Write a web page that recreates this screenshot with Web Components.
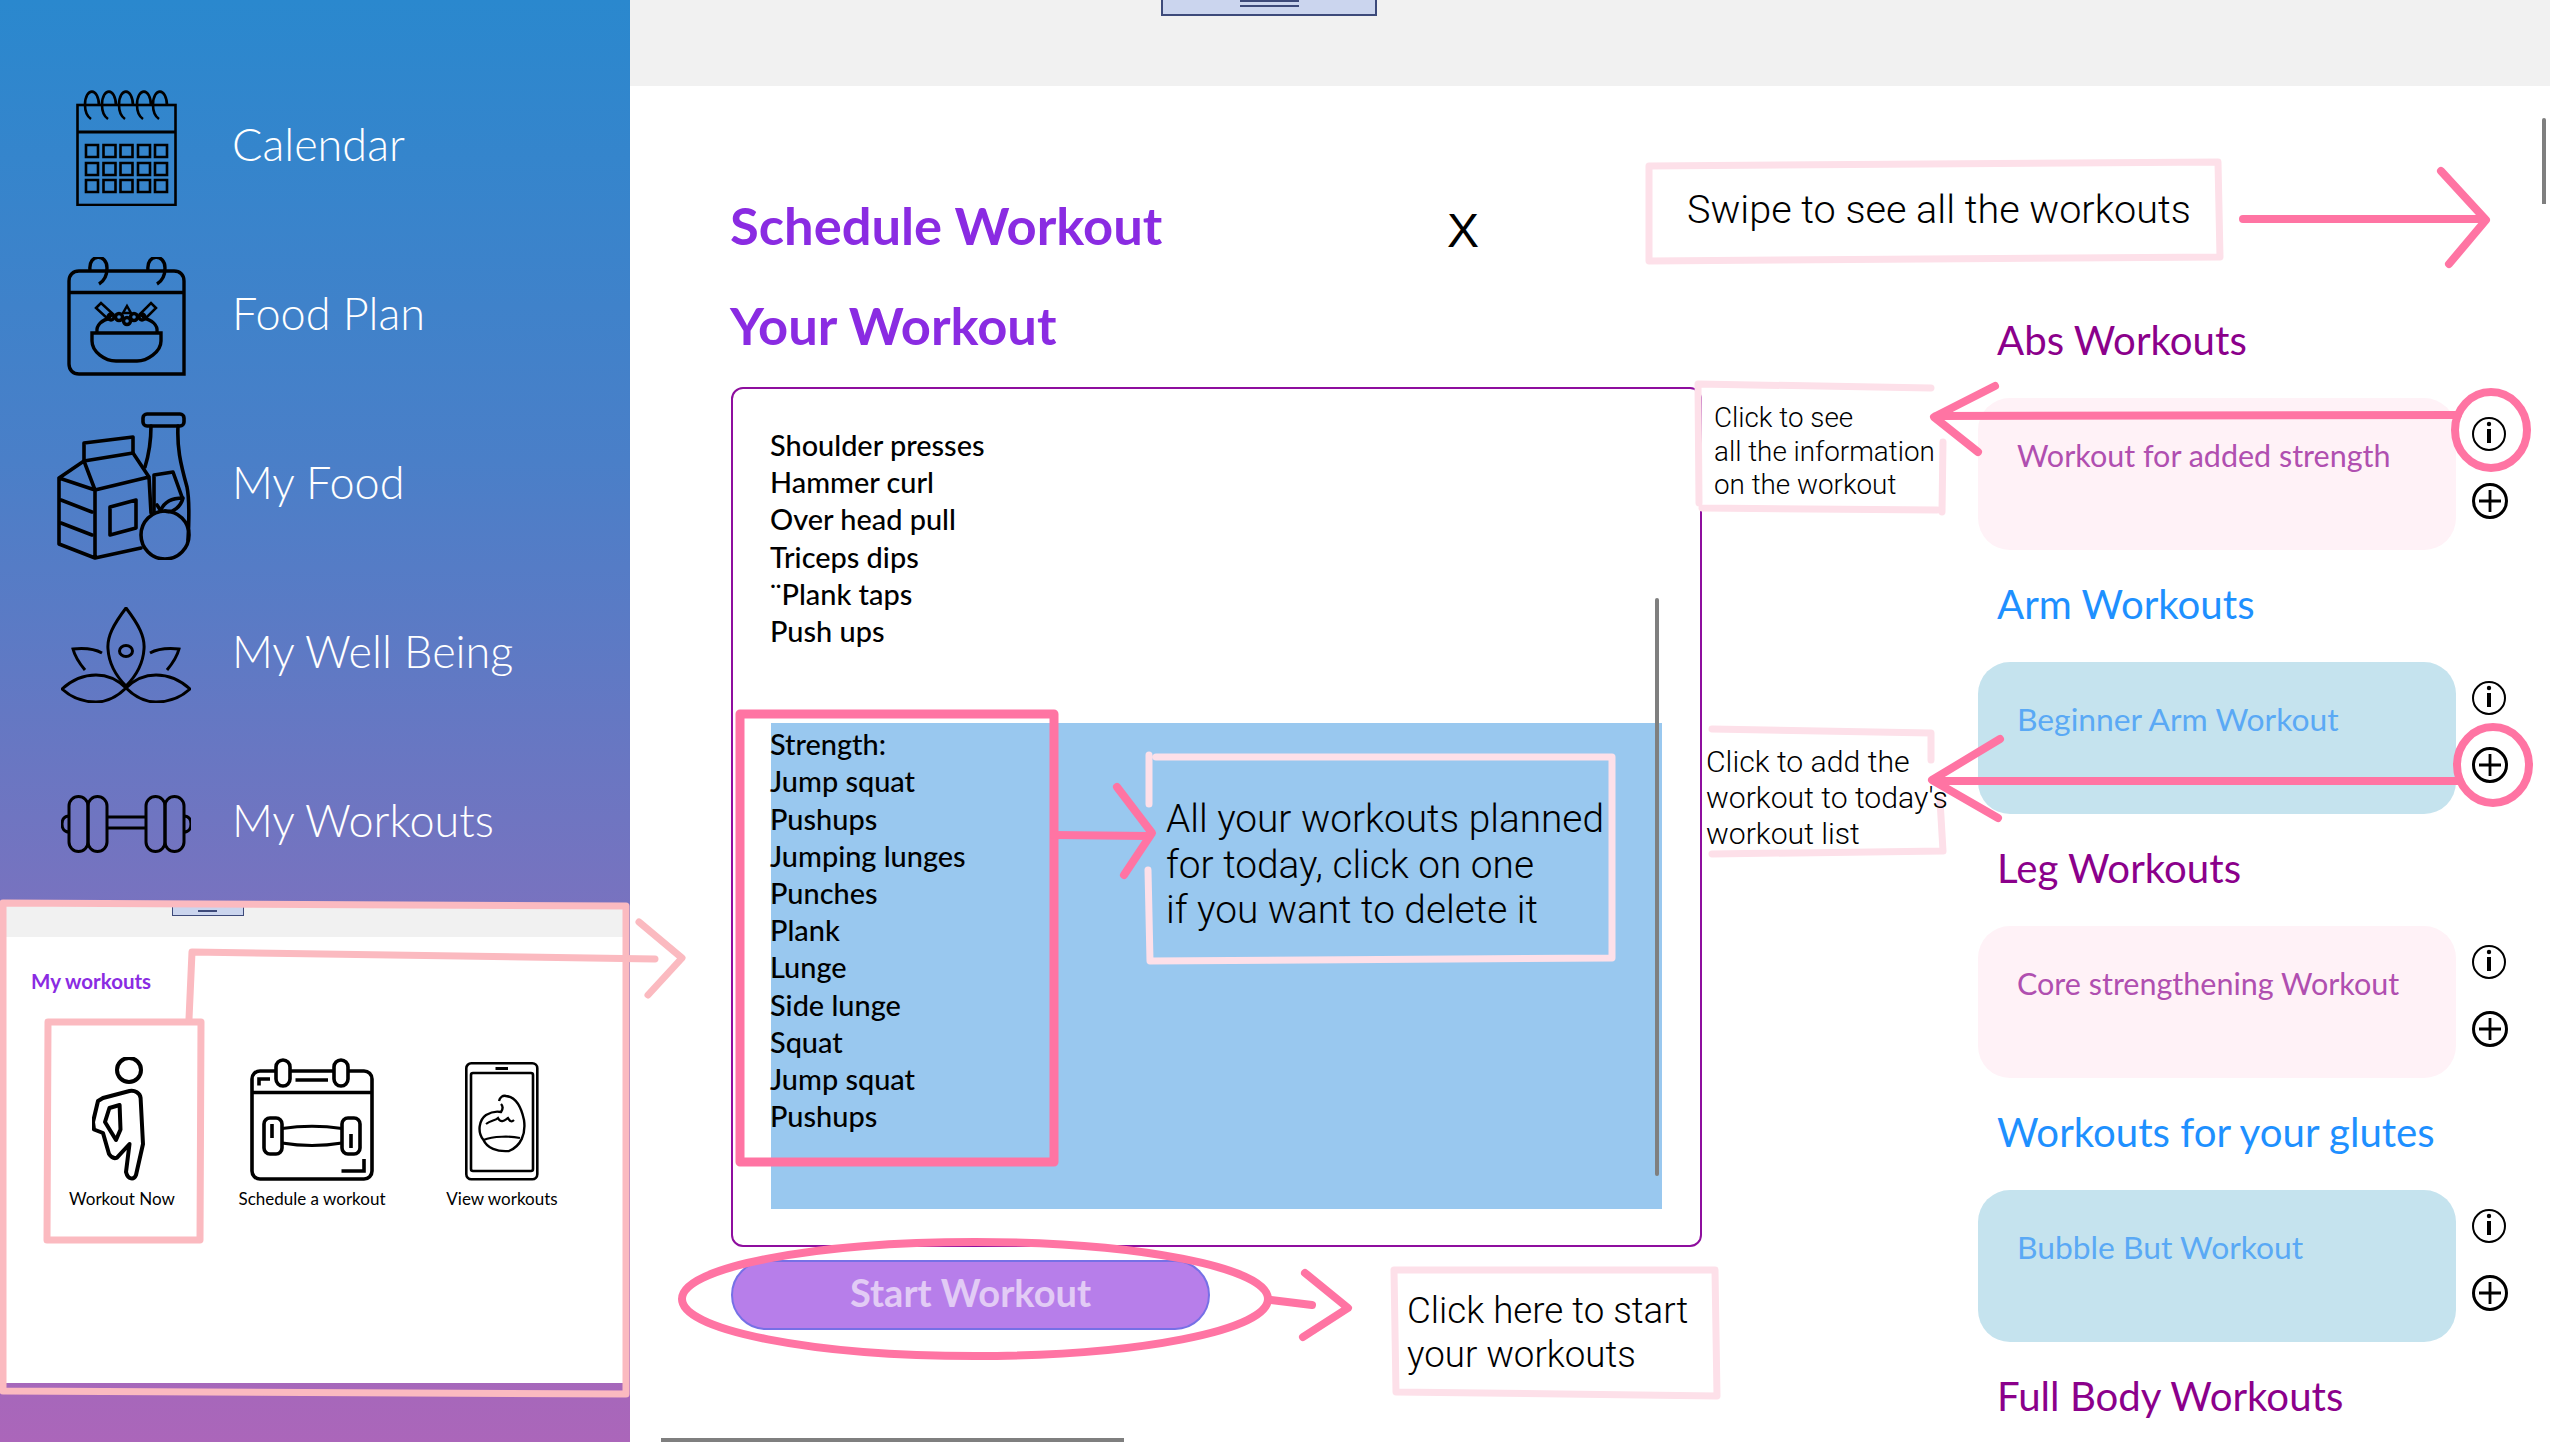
<!DOCTYPE html>
<html lang="en">
<head>
<meta charset="utf-8">
<title>Schedule Workout</title>
<style>
html, body {
    margin: 0;
    width: 2550px;
    height: 1442px;
    overflow: hidden;
    background: #fff;
    font-family: Lato, "Open Sans", sans-serif;
}
</style>
</head>
<body>
<app-shell>
    <side-nav slot="side">
        <nav-item label="Calendar">
            <svg width="101" height="116" viewBox="0 0 101 116" fill="none" stroke="#000" stroke-width="2.6">
                <rect x="1.5" y="15" width="98" height="100"/>
                <path d="M1.5 42H99.5" stroke-width="3"/>
                <path d="M23 16C23 -3 9 -3 9 15C9 22 12 27 15 29M40 16C40 -3 26 -3 26 15C26 22 29 27 32 29M57 16C57 -3 43 -3 43 15C43 22 46 27 49 29M75 16C75 -3 61 -3 61 15C61 22 64 27 67 29M91 16C91 -3 77 -3 77 15C77 22 80 27 83 29"/>
                <path d="M10 55h12v12h-12zM27.500 55h12v12h-12zM44.500 55h12v12h-12zM62 55h12v12h-12zM79 55h12v12h-12zM10 73h12v12h-12zM27.500 73h12v12h-12zM44.500 73h12v12h-12zM62 73h12v12h-12zM79 73h12v12h-12zM10 90h12v12h-12zM27.500 90h12v12h-12zM44.500 90h12v12h-12zM62 90h12v12h-12zM79 90h12v12h-12z"/>
            </svg>
        </nav-item>
        <nav-item label="Food Plan">
            <svg width="119" height="119" viewBox="0 0 119 119" fill="none" stroke="#000" stroke-width="3.4">
                <path d="M12 14H107C113 14 117 18 117 24V117H12C6 117 2 113 2 107V24C2 18 6 14 12 14Z"/>
                <path d="M2 35.500H117"/>
                <path d="M23 13C21 -3 40 -4 40 11C40 19 37 24 32 27M81 13C79 -3 98 -4 98 11C98 19 95 24 90 27"/>
                <path d="M25 76H94V84C94 95 80 104 70 104H49C38 104 25 95 25 84Z"/>
                <path d="M30 75C29 68 35 63 43 61M90 75C91 68 85 63 76 61"/>
                <circle cx="44" cy="60" r="3"/><circle cx="52" cy="60" r="3.500"/><circle cx="67" cy="60" r="3.500"/><circle cx="75" cy="60" r="3"/><circle cx="60" cy="64" r="3.500"/>
                <path d="M60 49L64 56H56Z" stroke-width="2.500"/>
                <path d="M29 51L34 46L46 57L41 62ZM89 51L84 46L73 57L78 62Z" stroke-width="2.500"/>
            </svg>
        </nav-item>
        <nav-item label="My Food">
            <svg style="margin-left:-4px" width="134" height="148" viewBox="0 0 134 148" fill="none" stroke="#000" stroke-width="3.600" stroke-linejoin="round" stroke-linecap="round">
                <rect x="86" y="2" width="41" height="12" rx="4"/>
                <path d="M94 14C94 30 92 42 88 55M121 14C120 35 123 50 130 75C133 90 132 110 131 128"/>
                <path d="M27 49V31L76 25V41"/>
                <path d="M27 49L76 41L92 65L38 78L27 49L2 66L38 78V146M2 66V132L38 146L84 136M92 65L94 101"/>
                <path d="M4 88L35 100M4 111L35 123"/>
                <path d="M53 95L79 88V116L53 123Z"/>
                <path d="M97 101V63L116 60L125 85"/>
                <ellipse cx="108" cy="123" rx="24" ry="24"/>
                <path d="M104 98C108 88 118 86 126 86C124 94 116 102 108 99M104 99L100 93"/>
            </svg>
        </nav-item>
        <nav-item label="My Well Being">
            <svg width="130" height="96" viewBox="0 0 130 96" fill="none" stroke="#000" stroke-width="3">
                <path d="M65 1C52 18 46 30 47 42C48 58 56 70 65 79C74 70 82 58 83 42C84 30 78 18 65 1Z"/>
                <ellipse cx="65" cy="44" rx="6.500" ry="5.500"/>
                <path d="M41 46C32 41 22 41 12 42C14 50 19 57 24 63M89 46C98 41 108 41 118 42C116 50 111 57 106 63"/>
                <path d="M1 82C12 72 24 68 35 68C46 68 56 72 65 81C56 90 46 95 35 95C24 95 12 92 1 82Z"/>
                <path d="M129 82C118 72 106 68 95 68C84 68 74 72 65 81C74 90 84 95 95 95C106 95 118 92 129 82Z"/>
            </svg>
        </nav-item>
        <nav-item label="My Workouts">
            <svg width="130" height="58" viewBox="0 0 130 58" fill="none" stroke="#000" stroke-width="3">
                <rect x="8" y="1.500" width="19" height="55" rx="9.500"/>
                <rect x="27" y="1.500" width="19" height="55" rx="9.500"/>
                <rect x="85" y="1.500" width="19" height="55" rx="9.500"/>
                <rect x="104" y="1.500" width="19" height="55" rx="9.500"/>
                <path d="M46 22H85M46 33H85"/>
                <path d="M8 21C3 21 1 25 1 29C1 33 3 37 8 37M123 21C128 21 130 25 130 29C130 33 128 37 123 37"/>
            </svg>
        </nav-item>
    </side-nav>

    <workout-inset slot="side">
        <inset-tile label="Workout Now">
            <svg style="margin-left:-7px" width="53" height="124" viewBox="0 0 53 124" fill="none" stroke="#000" stroke-width="4" stroke-linejoin="round">
                <ellipse cx="37" cy="13" rx="12" ry="12"/>
                <path d="M11 41L37.500 34C43 33 48 36 48.600 41L51 87L44 118C42 123 36 123 34 115L37.500 87L25 100.600C22 102 19 100 17 97L11 76L2 72.500L1 65L6 44Z"/>
                <path d="M17.400 51L27.600 48L28.500 72.500L24 83L13 65Z"/>
            </svg>
        </inset-tile>
        <inset-tile label="Schedule a workout">
            <svg width="124" height="123" viewBox="0 0 124 123" fill="none" stroke="#000" stroke-width="3.600">
                <rect x="2" y="13" width="120" height="108" rx="8"/>
                <path d="M2 34.500H122"/>
                <rect x="26" y="2" width="14" height="26" rx="7" fill="#fff"/>
                <rect x="84" y="2" width="14" height="26" rx="7" fill="#fff"/>
                <path d="M45.500 22H78M9 27.500V21H20M91.500 113H114V101"/>
                <rect x="14" y="60" width="18" height="36" rx="6"/>
                <rect x="92" y="60" width="18" height="36" rx="6"/>
                <path d="M22 66V80M101 76V90"/>
                <path d="M32 70.500Q62 66 92 70.500M32 85Q62 90 92 85" stroke-width="2.800"/>
            </svg>
        </inset-tile>
        <inset-tile label="View workouts">
            <svg width="74" height="119" viewBox="0 0 74 119" fill="none" stroke="#000" stroke-width="2.600">
                <rect x="1.300" y="1.300" width="71" height="116" rx="5"/>
                <rect x="6" y="11" width="62" height="98" rx="2"/>
                <path d="M30.500 6.500H43" stroke-width="3"/>
                <path d="M34 39C35 35 38 33 41 34C50 35 56 44 59 58C61 72 56 84 44 89C32 90 22 86 18.500 78C12 70 14 58 21 53C26 50 31 49 36 50C38 47 38 44 36 42" stroke-width="2.400"/>
                <path d="M18.500 78C28 74 46 74 55 76M21 62C26 58 30 59 33 56C36 62 40 58 43 56C45 60 47 60 49 58" stroke-width="2.200"/>
            </svg>
        </inset-tile>
    </workout-inset>

    <top-bar slot="main"></top-bar>
    <schedule-pane slot="main">
        <plan-column slot="left">
            <exercise-box>
                <exercise-list slot="plain" items="Shoulder presses|Hammer curl|Over head pull|Triceps dips|¨Plank taps|Push ups"></exercise-list>
                <exercise-list slot="picked" items="Strength:|Jump squat|Pushups|Jumping lunges|Punches|Plank|Lunge|Side lunge|Squat|Jump squat|Pushups"></exercise-list>
            </exercise-box>
        </plan-column>
        <workout-catalog slot="right">
            <workout-section heading="Abs Workouts" title-text="Workout for added strength" tone="pink"></workout-section>
            <workout-section heading="Arm Workouts" title-text="Beginner Arm Workout" tone="blue"></workout-section>
            <workout-section heading="Leg Workouts" title-text="Core strengthening Workout" tone="pink"></workout-section>
            <workout-section heading="Workouts for your glutes" title-text="Bubble But Workout" tone="blue"></workout-section>
            <workout-section heading="Full Body Workouts" tone="pink"></workout-section>
        </workout-catalog>
    </schedule-pane>

    <annotation-layer slot="over"></annotation-layer>
    <note-box slot="over" style="left:1687px;top:187px;font-size:39.600px;line-height:46px">Swipe to see all the workouts</note-box>
    <note-box slot="over" style="left:1714px;top:401px;font-size:27.800px;line-height:33.500px">Click to see<br>all the information<br>on the workout</note-box>
    <note-box slot="over" style="left:1706px;top:744px;font-size:30.200px;line-height:36px">Click to add the<br>workout to today's<br>workout list</note-box>
    <note-box slot="over" style="left:1166px;top:796px;font-size:38.800px;line-height:45.500px">All your workouts planned<br>for today, click on one<br>if you want to delete it</note-box>
    <note-box slot="over" style="left:1407px;top:1289px;font-size:36.700px;line-height:44px">Click here to start<br>your workouts</note-box>
</app-shell>

<script>
class AppShell extends HTMLElement {
    constructor() {
        super();
        this.attachShadow({ mode: 'open' }).innerHTML = `
        <style>
        :host { display: grid; grid-template-columns: 630px 1920px; width: 2550px; height: 1442px; position: relative; overflow: hidden; }
        .side { position: relative; background: linear-gradient(180deg, #2a88ce 0%, #4a7fc8 32%, #7a72bf 64%, #ab66ba 100%); height: 1442px; }
        .main { display: flex; flex-direction: column; height: 1442px; min-width: 0; }
        </style>
        <div class="side"><slot name="side"></slot></div>
        <div class="main"><slot name="main"></slot></div>
        <slot name="over"></slot>`;
    }
}

class SideNav extends HTMLElement {
    constructor() {
        super();
        this.attachShadow({ mode: 'open' }).innerHTML = `
        <style>
        :host { display: flex; flex-direction: column; padding-top: 60px; }
        </style>
        <slot></slot>`;
    }
}

class NavItem extends HTMLElement {
    constructor() {
        super();
        this.attachShadow({ mode: 'open' }).innerHTML = `
        <style>
        :host { display: flex; align-items: center; height: 169px; padding-left: 56px; color: #fff; }
        .ico { width: 140px; display: flex; justify-content: center; padding-top: 6px; margin-right: 36px; }
        .txt { font: 300 45px Lato, sans-serif; white-space: nowrap; margin-top: -2px; }
        </style>
        <div class="ico"><slot></slot></div>
        <div class="txt">${this.getAttribute('label')}</div>`;
    }
}

class WorkoutInset extends HTMLElement {
    constructor() {
        super();
        this.attachShadow({ mode: 'open' }).innerHTML = `
        <style>
        :host { display: block; position: absolute; left: 5px; top: 906px; width: 618px; height: 477px; background: #fff; }
        .bar { height: 31px; background: #f1f1f1; display: flex; justify-content: center; padding-right: 213px; }
        .handle { width: 70px; height: 5px; background: #cbd5ee; border: 1px solid #3d4a7a; display: flex; justify-content: center; padding-top: 3px; }
        .handle i { display: block; width: 19px; height: 2px; background: #3d4a7a; }
        h3 { margin: 29px 0 0 26px; font: 700 20.500px/30px Lato, sans-serif; color: #8a2be2; }
        .tiles { display: flex; padding: 60px 0 0 22px; }
        </style>
        <div class="bar"><div class="handle"><i></i></div></div>
        <h3>My workouts</h3>
        <div class="tiles"><slot></slot></div>`;
    }
}

class InsetTile extends HTMLElement {
    constructor() {
        super();
        this.attachShadow({ mode: 'open' }).innerHTML = `
        <style>
        :host { display: flex; flex-direction: column; align-items: center; width: 190px; }
        .ico { height: 125px; display: flex; align-items: flex-end; }
        span { margin-top: 7px; font: 400 17px/22px Lato, sans-serif; color: #000; white-space: nowrap; }
        </style>
        <div class="ico"><slot></slot></div>
        <span>${this.getAttribute('label')}</span>`;
    }
}

class TopBar extends HTMLElement {
    constructor() {
        super();
        this.attachShadow({ mode: 'open' }).innerHTML = `
        <style>
        :host { display: flex; height: 86px; flex: none; background: #f1f1f1; padding-left: 531px; }
        .handle { width: 212px; height: 14px; background: #cbd5ee; border: 2px solid #3d4a7a; border-top: 0; display: flex; flex-direction: column; align-items: center; gap: 3px; }
        .handle i { display: block; width: 59px; height: 2px; background: #3d4a7a; }
        </style>
        <div class="handle"><i></i><i></i></div>`;
    }
}

class SchedulePane extends HTMLElement {
    constructor() {
        super();
        this.attachShadow({ mode: 'open' }).innerHTML = `
        <style>
        :host { display: flex; flex: 1; min-height: 0; position: relative; }
        .left { width: 1348px; flex: none; }
        .right { flex: 1; min-width: 0; }
        .scroll-v { position: absolute; left: 1912px; top: 32px; width: 4px; height: 86px; border-radius: 2px 2px 0 0; background: #7f7f7f; }
        .scroll-h { position: absolute; left: 31px; bottom: 0; width: 463px; height: 4px; background: #7f7f7f; }
        </style>
        <div class="left"><slot name="left"></slot></div>
        <div class="right"><slot name="right"></slot></div>
        <div class="scroll-v"></div>
        <div class="scroll-h"></div>`;
    }
}

class PlanColumn extends HTMLElement {
    constructor() {
        super();
        this.attachShadow({ mode: 'open' }).innerHTML = `
        <style>
        :host { display: block; padding: 107px 0 0 100px; }
        h1 { margin: 0; font: 700 52.500px/64px Lato, sans-serif; color: #8a2be2; white-space: nowrap; }
        .second { margin-top: 36px; margin-bottom: 30px; }
        .head { position: relative; width: 970px; }
        .close { position: absolute; left: 717px; top: 10px; font: 400 48px/56px "Liberation Sans", sans-serif; color: #000; }
        button { display: block; margin: 13px 0 0 1px; width: 479px; height: 70px; border: 2px solid #7670e6; border-radius: 35px; background: #b77eea; color: #e2cbf5; font: 700 38px Lato, sans-serif; padding: 0 0 7px; }
        </style>
        <div class="head"><h1>Schedule Workout</h1><span class="close">X</span></div>
        <h1 class="second">Your Workout</h1>
        <slot></slot>
        <button>Start Workout</button>`;
    }
}

class ExerciseBox extends HTMLElement {
    constructor() {
        super();
        this.attachShadow({ mode: 'open' }).innerHTML = `
        <style>
        :host { display: block; position: relative; margin-left: 1px; width: 971px; height: 860px; box-sizing: border-box; border: 2px solid #8e0e9e; border-radius: 12px; padding: 37px 38px 38px 38px; }
        .picked { margin-top: 74px; height: 486px; background: #99c8ef; padding-top: 2px; box-sizing: border-box; }
        .bar { position: absolute; left: 922px; top: 209px; width: 4px; height: 578px; border-radius: 2px; background: #7f7f7f; }
        </style>
        <slot name="plain"></slot>
        <div class="picked"><slot name="picked"></slot></div>
        <div class="bar"></div>`;
    }
}

class ExerciseList extends HTMLElement {
    constructor() {
        super();
        const rows = this.getAttribute('items').split('|').map(t => `<li>${t}</li>`).join('');
        this.attachShadow({ mode: 'open' }).innerHTML = `
        <style>
        :host { display: block; }
        ul { list-style: none; margin: 0 0 0 -1px; padding: 0; font: 500 28.900px/37.200px Lato, sans-serif; color: #000; }
        </style>
        <ul>${rows}</ul>`;
    }
}

class WorkoutCatalog extends HTMLElement {
    constructor() {
        super();
        this.attachShadow({ mode: 'open' }).innerHTML = `
        <style>
        :host { display: flex; flex-direction: column; padding-top: 224px; }
        </style>
        <slot></slot>`;
    }
}

class WorkoutSection extends HTMLElement {
    constructor() {
        super();
        const heading = this.getAttribute('heading');
        const title = this.getAttribute('title-text');
        const tone = this.getAttribute('tone');
        const card = title ? `
        <div class="row">
            <div class="card">${title}</div>
            <div class="acts">
                <svg width="34" height="34" viewBox="0 0 34 34" fill="none" stroke="#000"><circle cx="17" cy="17" r="16" stroke-width="2"/><path d="M17 12V26" stroke-width="4"/><circle cx="17" cy="7" r="2.200" fill="#000" stroke="none"/></svg>
                <svg width="36" height="36" viewBox="0 0 36 36" fill="none" stroke="#000"><circle cx="18" cy="18" r="16.500" stroke-width="3"/><path d="M18 7V29M7 18H29" stroke-width="2.800"/></svg>
            </div>
        </div>` : '';
        this.attachShadow({ mode: 'open' }).innerHTML = `
        <style>
        :host { display: block; height: 264px; flex: none; }
        h2 { margin: 0 0 28px 19px; font: 400 40.200px/60px Lato, sans-serif; color: ${tone === 'pink' ? '#8b008b' : '#1e90ff'}; white-space: nowrap; }
        .row { display: flex; gap: 16px; }
        .card { width: 478px; height: 152px; box-sizing: border-box; padding: 37px 0 0 39px; border-radius: 32px; font: 400 ${tone === 'pink' ? 30.5 : 31.8}px/40px Lato, sans-serif;
            background: ${tone === 'pink' ? '#fff2f7' : '#c5e3ee'}; color: ${tone === 'pink' ? '#b04fb0' : '#5aa9f5'}; white-space: nowrap; }
        .acts { display: flex; flex-direction: column; align-items: flex-start; gap: 32px; padding-top: 19px; }
        svg { display: block; }
        </style>
        <h2>${heading}</h2>
        ${card}`;
    }
}

class AnnotationLayer extends HTMLElement {
    constructor() {
        super();
        this.attachShadow({ mode: 'open' }).innerHTML = `
        <style>
        :host { display: block; position: absolute; left: 0; top: 0; width: 2550px; height: 1442px; pointer-events: none; }
        svg { display: block; }
        .soft { stroke: #fbbac0; stroke-width: 7; }
        .hot { stroke: #ff74a3; stroke-width: 8; }
        .pale { stroke: #fde0e9; stroke-width: 7; }
        </style>
        <svg width="2550" height="1442" viewBox="0 0 2550 1442" fill="none" stroke-linecap="round" stroke-linejoin="round">
            <g class="soft">
                <path d="M3 903L626 906V1394L3 1391Z"/>
                <path d="M48 1022H201L200 1240H47Z"/>
                <path d="M189 1019L192 952L655 959"/>
                <path d="M639 922L682 958L648 995"/>
            </g>
            <g class="hot">
                <path d="M740 714H1054V1162H740Z" stroke-width="9"/>
                <path d="M1054 835L1148 836M1117 787L1152 833L1124 875"/>
                <ellipse cx="975" cy="1299" rx="293" ry="57"/>
                <path d="M1271 1300L1312 1305M1305 1273L1348 1308L1303 1337"/>
                <path d="M2243 219H2484M2441 171L2486 220L2449 264"/>
                <ellipse cx="2491" cy="430" rx="36" ry="38"/>
                <path d="M2458 415L1936 416M1995 386L1934 417L1978 452"/>
                <ellipse cx="2493" cy="765" rx="36" ry="38"/>
                <path d="M2460 781H1934M2000 739L1932 780L1998 818"/>
            </g>
            <g class="pale">
                <path d="M1649 166L2218 162L2220 257L1649 261Z"/>
                <path d="M1699 503L1698 384L1931 388M1702 508L1937 510M1943 442L1942 512"/>
                <path d="M1712 729L1931 733V760M1940 800L1943 851L1712 854"/>
                <path d="M1149 804V755M1156 757H1612V958L1150 961L1148 870"/>
                <path d="M1394 1270H1715L1717 1396L1396 1392Z"/>
            </g>
        </svg>`;
    }
}

class NoteBox extends HTMLElement {
    constructor() {
        super();
        this.attachShadow({ mode: 'open' }).innerHTML = `
        <style>
        :host { display: block; position: absolute; font-family: Roboto, "Liberation Sans", sans-serif; font-weight: 300; color: #000; white-space: nowrap; }
        </style>
        <slot></slot>`;
    }
}

customElements.define('app-shell', AppShell);
customElements.define('side-nav', SideNav);
customElements.define('nav-item', NavItem);
customElements.define('workout-inset', WorkoutInset);
customElements.define('inset-tile', InsetTile);
customElements.define('top-bar', TopBar);
customElements.define('schedule-pane', SchedulePane);
customElements.define('plan-column', PlanColumn);
customElements.define('exercise-box', ExerciseBox);
customElements.define('exercise-list', ExerciseList);
customElements.define('workout-catalog', WorkoutCatalog);
customElements.define('workout-section', WorkoutSection);
customElements.define('annotation-layer', AnnotationLayer);
customElements.define('note-box', NoteBox);
</script>
</body>
</html>
